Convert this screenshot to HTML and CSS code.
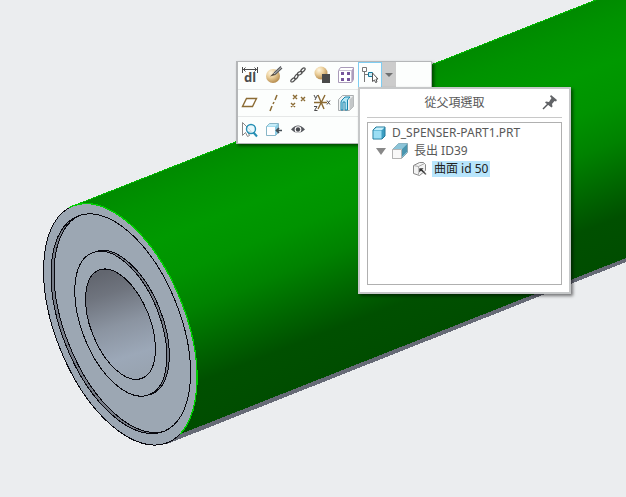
FILE: index.html
```html
<!DOCTYPE html>
<html lang="zh-Hant">
<head>
<meta charset="utf-8">
<meta name="viewport" content="width=device-width, initial-scale=1">
<title>D_SPENSER-PART1.PRT</title>
<link rel="stylesheet" href="styles.css">
</head>
<body>
<main class="viewport">
  <svg class="model" viewBox="0 0 626 497" preserveAspectRatio="xMinYMin slice" aria-hidden="true">
    <defs>
      <linearGradient id="body" gradientUnits="userSpaceOnUse" x1="355" y1="94" x2="448" y2="331">
        <stop offset="0" stop-color="#008a00"/>
        <stop offset=".1" stop-color="#009200"/>
        <stop offset=".25" stop-color="#009900"/>
        <stop offset=".4" stop-color="#009300"/>
        <stop offset=".55" stop-color="#008200"/>
        <stop offset=".7" stop-color="#006700"/>
        <stop offset=".83" stop-color="#005000"/>
        <stop offset="1" stop-color="#004d00"/>
      </linearGradient>
      <linearGradient id="boreshade" gradientUnits="userSpaceOnUse" x1="105" y1="272" x2="138" y2="376">
        <stop offset="0" stop-color="#62666f"/>
        <stop offset=".2" stop-color="#6f747e"/>
        <stop offset=".5" stop-color="#8b94a1"/>
        <stop offset=".8" stop-color="#9ca8b8"/>
        <stop offset="1" stop-color="#98a3b0"/>
      </linearGradient>
      <clipPath id="recess"><ellipse rx="116" ry="59" transform="translate(120.8 323.7) rotate(68.2)"/></clipPath>
      <clipPath id="bore"><ellipse rx="58.2" ry="29.6" transform="translate(120.5 324.2) rotate(68.2)"/></clipPath>
      <clipPath id="rim"><path d="M61 190H240V434H180L120 324Z"/></clipPath>
    </defs>
    <g shape-rendering="crispEdges">
      <path d="M167 444L626 262V254L160 430Z" fill="#666a76"/>
      <path d="M73 206L596 0H626V258L178 435L120 324Z" fill="url(#body)"/>
      <path d="M73 206L596 0" stroke="#00b800" fill="none"/>
      <g fill="#9ca7b3" stroke="#08080e">
        <ellipse rx="127.5" ry="65" transform="translate(120.3 324.3) rotate(68.2)"/>
        <g clip-path="url(#rim)"><ellipse rx="127.5" ry="65" transform="translate(120.3 324.3) rotate(68.2)" fill="none" stroke="#00cf00" stroke-width="1.300"/></g>
        <ellipse rx="116" ry="59" transform="translate(120.8 323.7) rotate(68.2)" fill="#777d88"/>
        <g clip-path="url(#recess)"><ellipse rx="116" ry="59" transform="translate(123.8 322.7) rotate(68.2)"/></g>
        <ellipse rx="116" ry="59" transform="translate(120.8 323.7) rotate(68.2)" fill="none"/>
        <ellipse rx="76.500" ry="39" transform="translate(123.3 322.9) rotate(68.2)" fill="#777d88"/>
        <ellipse rx="76.500" ry="39" transform="translate(120.8 323.7) rotate(68.2)"/>
        <g clip-path="url(#bore)"><path d="M80 260h80v125H80z" fill="url(#boreshade)" stroke="none"/></g>
        <ellipse rx="58.2" ry="29.6" transform="translate(120.5 324.2) rotate(68.2)" fill="none"/>
      </g>
    </g>
  </svg>

  <div class="toolbar" role="toolbar" aria-label="Model">
    <div class="row">
      <button class="tool" aria-label="Edit dimensions"><svg class="icon" viewBox="0 0 18 18"><path d="M1.500 1v6M16.500 1v6M2 3.500h14M4.500 1.500l-2 2 2 2M13.500 1.500l2 2-2 2" fill="none" stroke="#4c4c4c"/><text x="3" y="16" class="dim">dl</text></svg></button>
      <button class="tool" aria-label="Edit definition"><svg class="icon" viewBox="0 0 18 18"><circle cx="8" cy="10" r="7" fill="url(#gold)"/><path d="M6 10l3-4 7-6 1.500 2-7 6z" fill="#fff"/><path d="M9 7l7-6.500M10 8.500l7-6.500" stroke="#55585c" stroke-width="1.200"/><path d="M5 10.500l3.500-3.500 2 2z" fill="#54483a"/></svg></button>
      <button class="tool" aria-label="Edit references"><svg class="icon" viewBox="0 0 18 18"><g fill="none" stroke="#505050" stroke-width="1.200"><ellipse cx="4" cy="14" rx="2.600" ry="1.400" transform="rotate(-40 4 14)"/><ellipse cx="7.300" cy="10.700" rx="2.600" ry="1.400" transform="rotate(-60 7.300 10.700)"/><ellipse cx="10.700" cy="7.300" rx="2.600" ry="1.400" transform="rotate(-30 10.700 7.300)"/><ellipse cx="14" cy="4" rx="2.600" ry="1.400" transform="rotate(-45 14 4)"/></g></svg></button>
      <button class="tool" aria-label="Appearance"><svg class="icon" viewBox="0 0 18 18"><defs><radialGradient id="gold" cx=".35" cy=".28" r=".75"><stop offset="0" stop-color="#fff6e0"/><stop offset=".45" stop-color="#ecd09c"/><stop offset="1" stop-color="#b58b4d"/></radialGradient></defs><circle cx="8" cy="7" r="6.500" fill="url(#gold)"/><path d="M9 8h8v9H9z" fill="#4a4a4a"/></svg></button>
      <button class="tool" aria-label="Pattern"><svg class="icon" viewBox="0 0 18 18"><path d="M1.500 4.500l2-3h13v12l-2 3h-13z" fill="#fff" stroke="#a99bb9"/><path d="M14.500 4.500l2-3v12l-2 3z" fill="#ad9cbd"/><path d="M1.500 4.500h13v12" fill="none" stroke="#c9bfd3"/><path d="M4 6h3v3H4zM10 6h3v3h-3zM4 12h3v3H4zM10 12h3v3h-3z" fill="#76549c"/></svg></button>
      <button class="tool active" aria-label="Select from parents" aria-pressed="true"><svg class="icon" viewBox="0 0 18 18"><path d="M3.500 5v11M3.500 8.500h5" fill="none" stroke="#777"/><path d="M1.500 1.500h4v4h-4z" fill="#fff" stroke="#777"/><path d="M7.500 6.500h4v4h-4z" fill="#c7ecf8" stroke="#16789b"/><path d="M11.500 7v8.500l2-1.500 1 2.500 1.500-.5-1-3h2z" fill="#fff" stroke="#555"/></svg></button>
      <button class="drop" aria-label="More selection options"><svg class="arrow" viewBox="0 0 8 4"><path d="M0 0h8L4 4z" fill="#707070"/></svg></button>
    </div>
    <div class="row">
      <button class="tool" aria-label="Plane"><svg class="icon" viewBox="0 0 18 18"><path d="M5.500 4.500h10l-4 8h-10z" fill="#fff" stroke="#8b6b34" stroke-width="1.400"/></svg></button>
      <button class="tool" aria-label="Axis"><svg class="icon" viewBox="0 0 18 18"><path d="M12 1L10 6M9 8l-1 2M7 12l-2 5" stroke="#8b6b34" stroke-width="1.500"/></svg></button>
      <button class="tool" aria-label="Points"><svg class="icon" viewBox="0 0 18 18"><path d="M4 1l4 4M8 1L4 5M12 3l4 4M16 3l-4 4M2 9l4 4M6 9l-4 4" stroke="#8b6b34" stroke-width="1.400"/></svg></button>
      <button class="tool" aria-label="Coordinate system"><svg class="icon" viewBox="0 0 18 18"><path d="M1 8.500h13M5 1l6 14M12 1L5 15" stroke="#8b6b34" stroke-width="1.400"/><g fill="none" stroke="#4c4c4c"><path d="M1 1l1.500 3M4.500 1L2 6M1 12.500h3L1.500 16.500h3M14 6.500l3 4M17 6.500l-3 4"/></g></svg></button>
      <button class="tool" aria-label="Copy geometry"><svg class="icon" viewBox="0 0 18 18"><path d="M1.500 5.500l4-4h11v11l-4 4h-11z" fill="#f2f3f3" stroke="#a9adaf"/><path d="M12.500 5.500l4-4v11l-4 4z" fill="#c3c7c8"/><path d="M5 6l3-3h5l-2.500 3v10H8V8H6v8H4V8z" fill="#b5e8f6" stroke="#1683ac"/></svg></button>
    </div>
    <div class="row">
      <button class="tool" aria-label="Query select"><svg class="icon" viewBox="0 0 18 18"><path d="M1.500 1.500v13l3-3 2 4 2-1-2-4h4z" fill="#fff" stroke="#888"/><circle cx="10" cy="8" r="4.500" fill="#e2f6fd" fill-opacity=".8" stroke="#268fb4" stroke-width="1.400"/><path d="M12.500 11.500l3.500 4" stroke="#268fb4" stroke-width="2"/></svg></button>
      <button class="tool" aria-label="Activate part"><svg class="icon" viewBox="0 0 18 18"><path d="M1.500 5.500l3-3h9v9l-3 3h-9z" fill="#8bcee6" stroke="#88b6c7"/><path d="M2 5.500l2.500-2.500h8l-2 2.500z" fill="#c6edf9"/><path d="M2 6h8v8H2z" fill="#fff"/><path d="M17 9.500h-5M14 7l-2.500 2.500L14 12" fill="none" stroke="#444f56" stroke-width="1.700"/></svg></button>
      <button class="tool" aria-label="Show"><svg class="icon" viewBox="0 0 18 18"><path d="M2 8.500q7-8 14 0-7 7-14 0z" fill="#55585d"/><circle cx="9" cy="8.500" r="3.300" fill="#fff"/><circle cx="9" cy="8.500" r="2.200" fill="#484b50"/></svg></button>
    </div>
  </div>

  <section class="panel" aria-labelledby="panel-title">
    <header class="panel-head">
      <h1 class="title" id="panel-title">從父項選取</h1>
      <button class="pin" aria-label="Pin"><svg class="pin-icon" viewBox="0 0 16 16"><path d="M1 14l5-5" stroke="#55575a" stroke-width="1.500"/><path d="M9 0l6 5-1 1.500-1.500-.5-2.500 3 .5 2.500-1 1-6.500-5 1-1 3 .5L9.500 3 8 1.500z" fill="#626467"/></svg></button>
    </header>
    <ul class="tree" role="tree">
      <li class="node" role="treeitem"><svg class="part-icon" viewBox="0 0 14 14"><path d="M1 4l3-3h9v9l-3 3H1z" fill="#3b9dc1" stroke="#237999"/><path d="M1.500 4l3-2.500h8L10 4z" fill="#c6f0fc"/><path d="M1.500 4.500h8v8h-8z" fill="#9bdef4"/></svg><span class="name">D_SPENSER-PART1.PRT</span></li>
      <li class="node child" role="treeitem" aria-expanded="true"><svg class="twist" viewBox="0 0 10 7"><path d="M0 0h10L5 7z" fill="#888"/></svg><svg class="node-icon" viewBox="0 0 16 16"><path d="M.5 6.500l6-6h9v9l-6 6h-9z" fill="#bfe6f2" stroke="#89a5ae"/><path d="M1 6l5.500-5.500h9L10 6z" fill="#8cc4d8"/><path d="M10 6l5-5v8l-5 5z" fill="#4995af"/><path d="M.5 6.500h9v9h-9z" fill="#f8f8f8" stroke="#b4b4b4"/></svg><span class="name">長出 ID39</span></li>
      <li class="node grandchild" role="treeitem" aria-selected="true"><svg class="node-icon" viewBox="0 0 16 16"><path d="M1.500 4.500l6-3h4l2 2v6l-6 5-6-2z" fill="#f2f2f2" stroke="#888"/><path d="M1.500 4.500l5 1 6-3M6.500 5.500v8" fill="none" stroke="#aaa"/><path d="M7 7h5l-1.500 1.500L14.500 13l-1 1L9 10l-2 2z" fill="#333" stroke="#fff" stroke-width=".5"/></svg><span class="name selected">曲面 id 50</span></li>
    </ul>
  </section>
</main>
</body>
</html>
```
FILE: styles.css
```css
* { box-sizing: border-box; }

body {
  margin: 0;
  font: 12px/18px "Noto Sans", "Noto Sans CJK TC", sans-serif;
  color: #585858;
}

button {
  padding: 0;
  border: 0;
  background: none;
}

.viewport {
  position: relative;
  min-height: 100vh;
  overflow: hidden;
  background: #ebedef;
}

.model {
  position: absolute;
  inset: 0;
  width: 100%;
  height: 100%;
}

.toolbar {
  position: absolute;
  left: 236px;
  top: 61px;
  width: 196px;
  border: 1px solid #b4b6b8;
  border-left-width: 2px;
  background: #fcfefd;
  box-shadow: 2px 2px 3px rgba(0, 0, 0, .5);
}

.row {
  display: flex;
  height: 27px;
}

.row + .row { border-top: 1px solid #e6e8e8; }

.tool {
  display: grid;
  place-items: center;
  width: 24px;
  height: 26px;
}

.icon {
  width: 18px;
  height: 18px;
  overflow: visible;
}

.dim {
  font: bold 13px/13px "Noto Sans", sans-serif;
  fill: #4c4c4c;
}

.active { border: 1px solid #7fcdf2; }

.drop {
  display: grid;
  place-items: center;
  width: 14px;
  height: 26px;
  background: #cccccc;
}

.arrow {
  width: 8px;
  height: 4px;
}

.panel {
  position: absolute;
  left: 358px;
  top: 87px;
  width: 213px;
  padding: 0 7px 7px;
  border: 2px solid #c6c8c9;
  background: #fff;
  box-shadow: 2px 2px 3px rgba(0, 0, 0, .5);
}

.panel-head {
  display: grid;
  grid-template-columns: 1fr auto;
  align-items: center;
  height: 29px;
  padding-right: 4px;
  border-bottom: 1px solid #c8c8c8;
}

.title {
  margin: 0;
  font-size: 12px;
  font-weight: 400;
  text-align: center;
}

.pin, .pin-icon {
  display: block;
  width: 16px;
  height: 16px;
}

.tree {
  height: 163px;
  margin: 4px 0 0;
  padding: 1px 4px;
  border: 1px solid #b0b0b0;
  list-style: none;
}

.node {
  display: flex;
  align-items: center;
  gap: 6px;
  height: 18px;
}

.child { padding-left: 4px; }

.grandchild {
  gap: 4px;
  padding-left: 40px;
}

.part-icon {
  width: 14px;
  height: 14px;
}

.node-icon {
  width: 16px;
  height: 16px;
}

.twist {
  width: 10px;
  height: 7px;
}

.name {
  line-height: 16px;
  white-space: nowrap;
}

.selected {
  padding: 0 2px;
  background: #b8e5fc;
  color: #222;
}
```
